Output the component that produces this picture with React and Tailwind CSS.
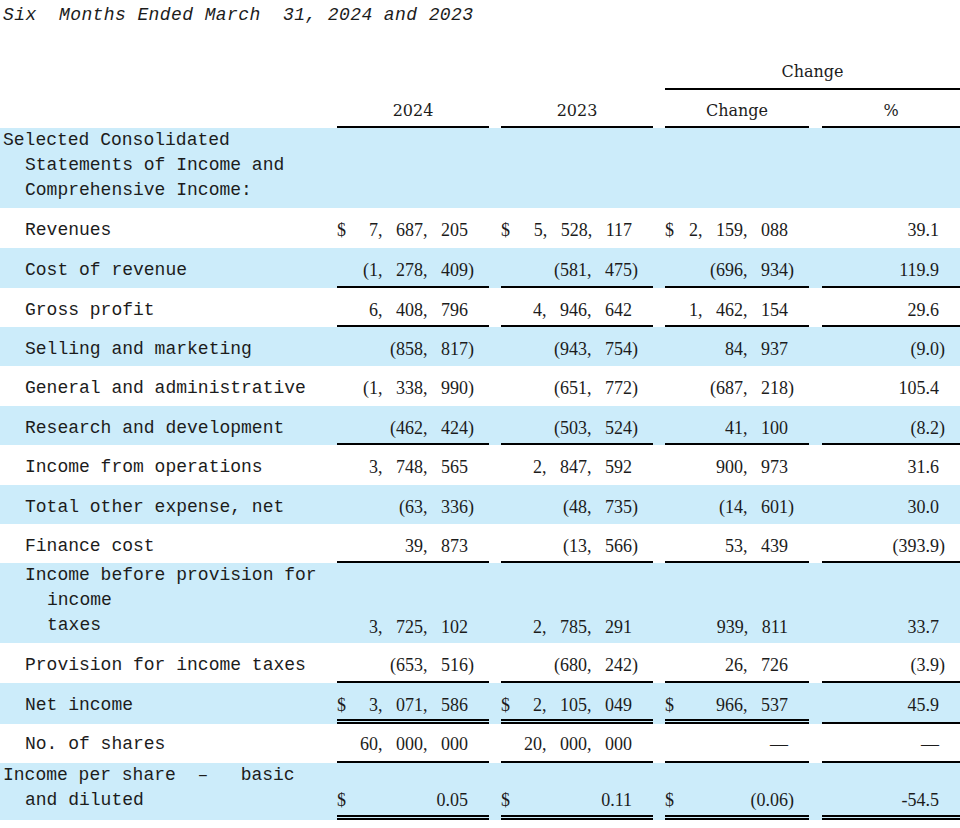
import React from 'react';

const LABEL = "font-['Liberation_Mono',monospace] text-[18px]";
const NUM = "font-['Liberation_Serif',serif] text-[18px] leading-[24px] [word-spacing:9px]";
const HEAD = "font-['DejaVu_Serif',serif] text-[16px] leading-[22px]";

// column widths + gaps between them
const COLS = ['w-[152px]', 'ml-[12px] w-[152px]', 'ml-[12px] w-[144px]', 'ml-[13px] w-[138px]'];

const LINE = {
  s: 'border-b-2 border-black',
  d: 'border-b-[5px] border-double border-black',
};

const rows = [
  {
    lines: [
      ['Selected Consolidated', 'pl-[3px]'],
      ['Statements of Income and', 'pl-[25px]'],
      ['Comprehensive Income:', 'pl-[25px]'],
    ],
    h: 'h-[80px]', blue: true, lh: 'leading-[25px]', pt: 'pt-0',
  },
  { lines: [['Revenues', 'pl-[25px]']], h: 'h-[40px]',
    cells: [['$', '7, 687, 205'], ['$', '5, 528, 117'], ['$', '2, 159, 088'], ['', '39.1']] },
  { lines: [['Cost of revenue', 'pl-[25px]']], h: 'h-[40px]', blue: true, u: 'ssss',
    cells: [['', '(1, 278, 409)'], ['', '(581, 475)'], ['', '(696, 934)'], ['', '119.9']] },
  { lines: [['Gross profit', 'pl-[25px]']], h: 'h-[39px]', u: 'ssss',
    cells: [['', '6, 408, 796'], ['', '4, 946, 642'], ['', '1, 462, 154'], ['', '29.6']] },
  { lines: [['Selling and marketing', 'pl-[25px]']], h: 'h-[39px]', blue: true,
    cells: [['', '(858, 817)'], ['', '(943, 754)'], ['', '84, 937'], ['', '(9.0)']] },
  { lines: [['General and administrative', 'pl-[25px]']], h: 'h-[40px]',
    cells: [['', '(1, 338, 990)'], ['', '(651, 772)'], ['', '(687, 218)'], ['', '105.4']] },
  { lines: [['Research and development', 'pl-[25px]']], h: 'h-[39px]', blue: true, u: 'ssss',
    cells: [['', '(462, 424)'], ['', '(503, 524)'], ['', '41, 100'], ['', '(8.2)']] },
  { lines: [['Income from operations', 'pl-[25px]']], h: 'h-[40px]',
    cells: [['', '3, 748, 565'], ['', '2, 847, 592'], ['', '900, 973'], ['', '31.6']] },
  { lines: [['Total other expense, net', 'pl-[25px]']], h: 'h-[39px]', blue: true,
    cells: [['', '(63, 336)'], ['', '(48, 735)'], ['', '(14, 601)'], ['', '30.0']] },
  { lines: [['Finance cost', 'pl-[25px]']], h: 'h-[39px]', u: 'ssss',
    cells: [['', '39, 873'], ['', '(13, 566)'], ['', '53, 439'], ['', '(393.9)']] },
  {
    lines: [
      ['Income before provision for', 'pl-[25px]'],
      ['income', 'pl-[47px]'],
      ['taxes', 'pl-[47px]'],
    ],
    h: 'h-[80px]', blue: true, lh: 'leading-[25px]', pt: 'pt-0', vt: 'pt-[52px]',
    cells: [['', '3, 725, 102'], ['', '2, 785, 291'], ['', '939, 811'], ['', '33.7']],
  },
  { lines: [['Provision for income taxes', 'pl-[25px]']], h: 'h-[40px]', u: 'ssss',
    cells: [['', '(653, 516)'], ['', '(680, 242)'], ['', '26, 726'], ['', '(3.9)']] },
  { lines: [['Net income', 'pl-[25px]']], h: 'h-[41px]', blue: true, u: 'ddds',
    cells: [['$', '3, 071, 586'], ['$', '2, 105, 049'], ['$', '966, 537'], ['', '45.9']] },
  { lines: [['No. of shares', 'pl-[25px]']], h: 'h-[39px]', u: 'ssss', pt: 'pt-[8px]', vt: 'pt-[8px]',
    cells: [['', '60, 000, 000'], ['', '20, 000, 000'], ['', '—'], ['', '—']] },
  {
    lines: [
      ['Income per share  –   basic', 'pl-[3px]'],
      ['and diluted', 'pl-[25px]'],
    ],
    h: 'h-[57px]', blue: true, lh: 'leading-[25px]', pt: 'pt-0', vt: 'pt-[25px]', u: 'dddd',
    cells: [['$', '0.05'], ['$', '0.11'], ['$', '(0.06)'], ['', '-54.5']],
  },
];

function Cell({ col, dollar, value, under, vt }) {
  const paren = value.endsWith(')');
  const body = paren ? value.slice(0, -1) : value;
  return (
    <div className={`${COLS[col]} h-full flex justify-between items-start ${vt} ${under ? LINE[under] : ''}`}>
      <span className={NUM}>{dollar}</span>
      <span className={`${NUM} flex pr-[13px]`}>
        <span>{body}</span>
        <span className="w-[8px]">{paren ? ')' : ''}</span>
      </span>
    </div>
  );
}

function Row({ row }) {
  return (
    <div className={`flex ${row.h} ${row.blue ? 'bg-[#ccecfa]' : 'bg-white'}`}>
      <div className={`w-[337px] shrink-0 ${LABEL} ${row.lh || 'leading-[24px]'} ${row.pt || 'pt-[10px]'}`}>
        {row.lines.map(([t, pl]) => (
          <div key={t} className={`${pl} whitespace-pre`}>{t}</div>
        ))}
      </div>
      {row.cells &&
        row.cells.map(([d, v], i) => (
          <Cell key={i} col={i} dollar={d} value={v} vt={row.vt || 'pt-[10px]'} under={row.u ? row.u[i] : null} />
        ))}
    </div>
  );
}

export default function App() {
  return (
    <div className="w-[960px] h-[828px] bg-white text-[#1c1c1c] overflow-hidden">
      <div className={`h-[30px] pt-[3px] pl-[3px] italic ${LABEL} leading-[24px] tracking-[0.4px] whitespace-pre`}>
        Six  Months Ended March  31, 2024 and 2023
      </div>

      <div className="h-[60px] flex justify-end">
        <div className={`w-[295px] flex items-end justify-center pb-[5px] border-b-2 border-black ${HEAD}`}>
          Change
        </div>
      </div>

      <div className="h-[38px] flex">
        <div className="w-[337px] shrink-0" />
        {['2024', '2023', 'Change', '%'].map((t, i) => (
          <div key={t} className={`${COLS[i]} flex items-end justify-center pb-[4px] border-b-2 border-black ${HEAD}`}>
            {t}
          </div>
        ))}
      </div>

      {rows.map((r, i) => (
        <Row key={i} row={r} />
      ))}
    </div>
  );
}
